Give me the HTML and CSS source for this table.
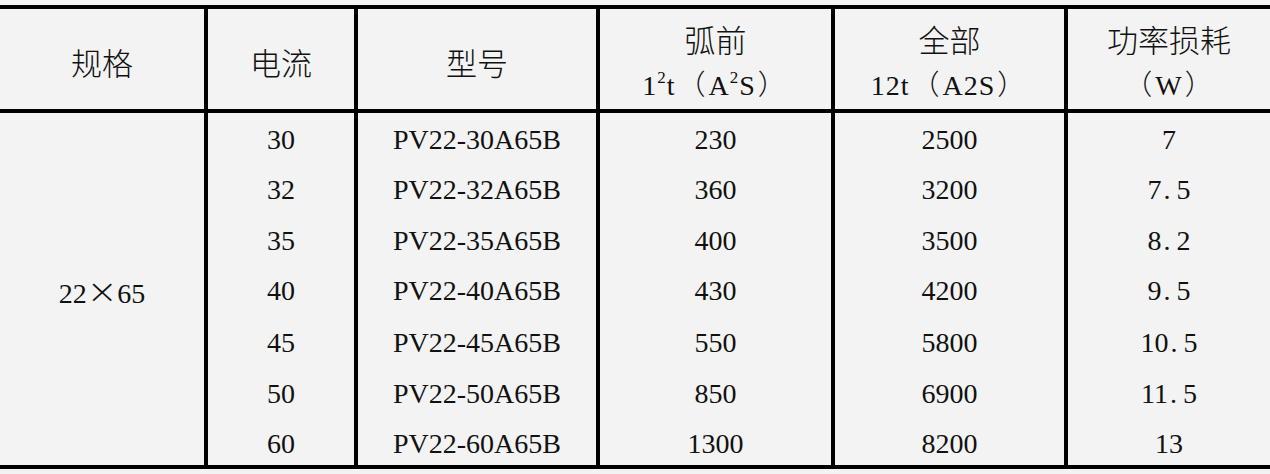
FILE: index.html
```html
<!DOCTYPE html>
<html lang="zh">
<head>
<meta charset="utf-8">
<title>规格表</title>
<link rel="stylesheet" href="styles.css">
</head>
<body>
<table class="spec">
  <colgroup>
    <col class="c1"><col class="c2"><col class="c3"><col class="c4"><col class="c5"><col class="c6">
  </colgroup>
  <thead>
    <tr>
      <th>规格</th>
      <th>电流</th>
      <th>型号</th>
      <th><span class="ln">弧前</span><span class="ln">1<sup>2</sup>t<span class="p">（</span>A<sup>2</sup>S<span class="p">）</span></span></th>
      <th><span class="ln">全部</span><span class="ln">12t<span class="p">（</span>A2S<span class="p">）</span></span></th>
      <th class="last"><span class="ln">功率损耗</span><span class="ln"><span class="p">（</span>W<span class="p">）</span></span></th>
    </tr>
  </thead>
  <tbody>
    <tr class="r50"><td rowspan="7" class="size">22<span class="x">×</span>65</td><td>30</td><td>PV22-30A65B</td><td>230</td><td>2500</td><td class="last">7</td></tr>
    <tr class="r50"><td>32</td><td>PV22-32A65B</td><td>360</td><td>3200</td><td class="last">7<span class="dot">.</span>5</td></tr>
    <tr class="r51"><td>35</td><td>PV22-35A65B</td><td>400</td><td>3500</td><td class="last">8<span class="dot">.</span>2</td></tr>
    <tr class="r50"><td>40</td><td>PV22-40A65B</td><td>430</td><td>4200</td><td class="last">9<span class="dot">.</span>5</td></tr>
    <tr class="r50 lo"><td>45</td><td>PV22-45A65B</td><td>550</td><td>5800</td><td class="last">10<span class="dot">.</span>5</td></tr>
    <tr class="r51 lo"><td>50</td><td>PV22-50A65B</td><td>850</td><td>6900</td><td class="last">11<span class="dot">.</span>5</td></tr>
    <tr class="r50 lo"><td>60</td><td>PV22-60A65B</td><td>1300</td><td>8200</td><td class="last">13</td></tr>
  </tbody>
</table>
</body>
</html>
```
FILE: styles.css
```css
html, body {
  margin: 0;
  padding: 0;
  background: #f3f3f3;
}
body {
  padding-top: 5px;
  height: 469px;
  overflow: hidden;
}
.spec {
  width: 1270px;
  table-layout: fixed;
  border-collapse: separate;
  border-spacing: 0;
  border-top: 4px solid #000;
  border-bottom: 4px solid #000;
  color: #111;
  font-family: "Liberation Serif", "Noto Sans CJK SC", serif;
  font-size: 28px;
}
.c1 { width: 208px; }
.c2 { width: 150px; }
.c3 { width: 242px; }
.c4 { width: 235px; }
.c5 { width: 233px; }
.c6 { width: 202px; }
.spec th,
.spec td {
  box-sizing: border-box;
  padding: 0;
  text-align: center;
  vertical-align: middle;
  border-right: 4px solid #000;
  font-weight: normal;
}
.spec th.last,
.spec td.last {
  border-right: none;
}
.spec thead th {
  height: 104px;
  border-bottom: 4px solid #000;
  padding-top: 6px;
  font-family: "Noto Sans CJK SC", sans-serif;
  font-weight: 300;
  font-size: 31px;
  line-height: 44px;
}
.ln {
  display: block;
}
.ln sup {
  font-family: "Liberation Serif", serif;
  font-size: 17px;
  line-height: 0;
  vertical-align: 12px;
}
.spec thead .ln + .ln {
  font-family: "Liberation Serif", "Noto Sans CJK SC", serif;
  font-size: 28px;
  letter-spacing: 1px;
}
.p {
  font-family: "Noto Sans CJK SC", sans-serif;
  font-weight: 300;
  margin: 0 2px;
}
.spec tbody td {
  padding-top: 4px;
  line-height: 30px;
}
.spec tbody tr.lo td {
  padding-top: 8px;
}
.spec tbody td.size {
  padding-top: 6px;
}
.r50 { height: 50px; }
.r51 { height: 51px; }
.x {
  display: inline-block;
  font-family: "DejaVu Sans", sans-serif;
  font-weight: 200;
  font-size: 34px;
  margin: 0 1px;
  transform: scaleX(1.1);
}
.dot {
  margin: 0 6px 0 2px;
}
```
